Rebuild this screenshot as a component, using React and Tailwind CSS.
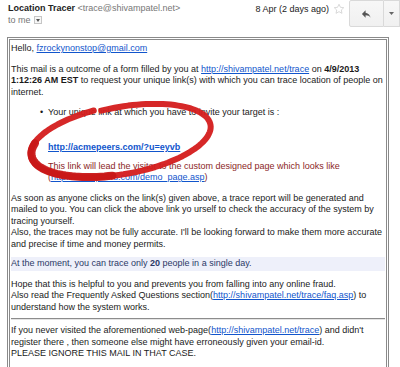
import React from "react";

const Link = ({ children, className = "" }) => (
  <a href="#" className={`text-[#1155cc] underline ${className}`}>
    {children}
  </a>
);

// hand drawn red ring around the link
const ringPath = (t0, t1, k0, k1, steps = 120) => {
  const cx = 122, cy = 140, rx = 91, ry = 34;
  const rot = (-10 * Math.PI) / 180;
  const pts = [];
  for (let i = 0; i <= steps; i++) {
    const deg = t0 + ((t1 - t0) * i) / steps;
    const t = (deg * Math.PI) / 180;
    const k = k0 + (k1 - k0) * (i / steps);
    const x = rx * k * Math.cos(t);
    const y = ry * k * Math.sin(t);
    pts.push([cx + x * Math.cos(rot) - y * Math.sin(rot), cy + x * Math.sin(rot) + y * Math.cos(rot)]);
  }
  return pts.map((p, i) => `${i ? "L" : "M"}${p[0].toFixed(1)} ${p[1].toFixed(1)}`).join(" ");
};

const RedRing = () => (
  <svg className="absolute left-0 top-0 pointer-events-none" width="400" height="367" viewBox="0 0 400 367">
    <path d={ringPath(-100, 256, 0.97, 1.03)} fill="none" stroke="#d41c1c" strokeWidth="6" strokeLinecap="round" strokeLinejoin="round" opacity="0.95" />
    <path d={ringPath(100, 200, 1.0, 1.01, 40)} fill="none" stroke="#c81717" strokeWidth="8" strokeLinecap="round" opacity="0.95" />
  </svg>
);

const App = () => {
  return (
    <div className="relative w-[400px] h-[367px] overflow-hidden bg-white text-[#222] font-['Liberation_Sans',Arial,sans-serif]">
      {/* header */}
      <div className="flex justify-between h-[37px]">
        <div className="pl-2 pt-[2px] text-[9px] leading-[12px]">
          <div>
            <span className="font-bold text-[#222]">Location Tracer</span>{" "}
            <span className="text-[#777]">&lt;trace@shivampatel.net&gt;</span>
          </div>
          <div className="flex items-center gap-[3px] text-[#777]">
            to me
            <span className="flex items-center justify-center w-[8px] h-[8px] border border-[#c6c6c6] bg-[#f7f7f7]">
              <svg width="4" height="3" viewBox="0 0 4 3">
                <path d="M0 0h4L2 3z" fill="#555" />
              </svg>
            </span>
          </div>
        </div>
        <div className="flex items-start">
          <span className="text-[9px] leading-[12px] text-[#222] mt-[3px] mr-[4px]">8 Apr (2 days ago)</span>
          <svg className="mt-[3px] mr-[4px]" width="12" height="12" viewBox="0 0 24 24">
            <path d="M12 2.5l2.9 6.1 6.6.8-4.9 4.6 1.3 6.6L12 17.3l-5.9 3.3 1.3-6.6-4.9-4.6 6.6-.8z" fill="none" stroke="#cfcfcf" strokeWidth="1.6" strokeLinejoin="round" />
          </svg>
          <div className="flex h-[27px]">
            <div className="flex items-center justify-center w-[35px] border border-[#d9d9d9] rounded-l-[2px] bg-gradient-to-b from-[#f7f7f7] to-[#f0f0f0]">
              <svg width="11" height="10" viewBox="0 0 24 22">
                <path d="M10 8V3L2 11l8 8v-5c5 0 8.5 1.6 11 5.5-1-5.5-4.5-10.5-11-11.5z" fill="#555" />
              </svg>
            </div>
            <div className="flex items-center justify-center w-[16px] border border-l-0 border-[#d9d9d9] bg-gradient-to-b from-[#f7f7f7] to-[#f0f0f0]">
              <svg width="5" height="3" viewBox="0 0 5 3">
                <path d="M0 0h5L2.5 3z" fill="#666" />
              </svg>
            </div>
          </div>
        </div>
      </div>

      {/* message body */}
      <div className="ml-[7px] w-[382px] h-[330px] border-[3px] border-b-0 border-double border-[#8a8a8a] pl-[1px] pr-[1px] pt-[3px] text-[9px] leading-[11.5px] text-[#1a1a1a]">
        <p>
          Hello, <Link>fzrockynonstop@gmail.com</Link>
        </p>
        <p className="mt-[9px]">
          This mail is a outcome of a form filled by you at <Link>http://shivampatel.net/trace</Link> on{" "}
          <b>4/9/2013</b>
          <br />
          <b>1:12:26 AM EST</b> to request your unique link(s) with which you can trace location of people on
          <br />
          internet.
        </p>
        <div className="mt-[9px] flex pl-[29px]">
          <span className="w-[8px]">•</span>
          <span>Your unique link at which you have to invite your target is :</span>
        </div>
        <div className="pl-[37px]">
          <p className="mt-[23px]">
            <Link className="font-bold">http://acmepeers.com/?u=eyvb</Link>
          </p>
          <p className="mt-[7.5px] text-[#8b2626]">
            This link will lead the visitor to the custom designed page which looks like
            <br />(<Link>http://acmepeers.com/demo_page.asp</Link>)
          </p>
        </div>
        <p className="mt-[9px]">
          As soon as anyone clicks on the link(s) given above, a trace report will be generated and
          <br />
          mailed to you. You can click the above link yo urself to check the accuracy of the system by
          <br />
          tracing yourself.
          <br />
          Also, the traces may not be fully accurate. I'll be looking forward to make them more accurate
          <br />
          and precise if time and money permits.
        </p>
        <p className="mt-[7px] py-[1px] bg-[#eef0fa] text-[#2b3866]">
          At the moment, you can trace only <b>20</b> people in a single day.
        </p>
        <p className="mt-[8px]">
          Hope that this is helpful to you and prevents you from falling into any online fraud.
          <br />
          Also read the Frequently Asked Questions section(<Link>http://shivampatel.net/trace/faq.asp</Link>) to
          <br />
          understand how the system works.
        </p>
        <div className="mt-[5px] border-t border-[#8c8c8c] border-b border-b-[#e4e4e4]" />
        <p className="mt-[5px]">
          If you never visited the aforementioned web-page(<Link>http://shivampatel.net/trace</Link>) and didn't
          <br />
          register there , then someone else might have erroneously given your email-id.
          <br />
          PLEASE IGNORE THIS MAIL IN THAT CASE.
        </p>
      </div>

      <RedRing />
    </div>
  );
};

export default App;
